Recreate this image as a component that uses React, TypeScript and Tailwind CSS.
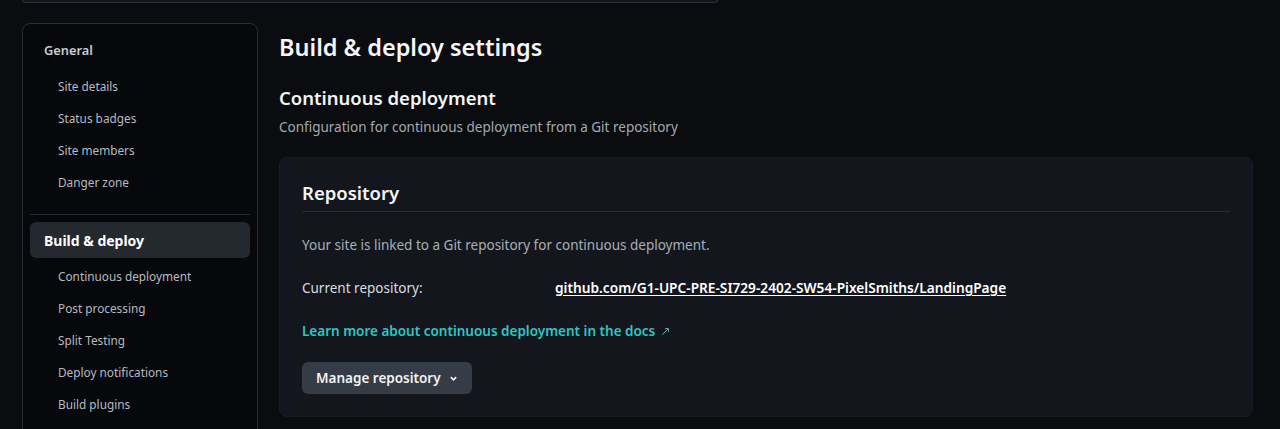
import React from "react";

const generalItems = ["Site details", "Status badges", "Site members", "Danger zone"];
const buildItems = [
  "Continuous deployment",
  "Post processing",
  "Split Testing",
  "Deploy notifications",
  "Build plugins",
];

function SubItem({ label }: { label: string }) {
  return (
    <div className="h-8 flex items-center pl-[28px] text-[11.8px] text-[#b6bac0]">{label}</div>
  );
}

export default function App() {
  return (
    <div
      className="min-h-screen bg-[#0a0c10] overflow-hidden"
      style={{ fontFamily: '"Noto Sans", "Open Sans", sans-serif' }}
    >
      <div className="ml-[22px] w-[696px] h-[3px] rounded-b-md border-b border-x border-[#2c3039] bg-[#12151b]" />
      <div className="flex pt-[20px] pl-[22px] pr-[27px] gap-[21px]">
        <aside className="w-[236px] shrink-0 h-[430px] rounded-lg border border-[#2a2e35] bg-[#06080b] px-[7px] pt-[9px]">
          <div className="h-9 flex items-center px-[14px] text-[12.8px] font-semibold text-[#c9ccd1]">
            General
          </div>
          <div className="mt-[2px]">
            {generalItems.map((i) => (
              <SubItem key={i} label={i} />
            ))}
          </div>
          <div className="mt-[15px] mb-[7px] h-px bg-[#262a31]" />
          <div className="h-9 flex items-center px-[14px] rounded-md bg-[#24282f] text-[14px] font-bold text-white">
            Build &amp; deploy
          </div>
          <div className="mt-[3px]">
            {buildItems.map((i) => (
              <SubItem key={i} label={i} />
            ))}
          </div>
        </aside>

        <main className="flex-1 pt-[8px]">
          <h1 className="text-[23.5px] leading-8 font-semibold text-[#f6f7f8]">Build &amp; deploy settings</h1>
          <h2 className="mt-[21px] text-[18.5px] leading-7 font-semibold text-[#f3f4f5]">Continuous deployment</h2>
          <p className="mt-[5px] text-[13.5px] leading-5 text-[#a4a9af]">
            Configuration for continuous deployment from a Git repository
          </p>

          <section className="mt-[20px] rounded-lg border border-[#181c23] bg-[#13171d] px-[22px] pt-[21px] pb-[22px]">
            <h3 className="pb-[4px] border-b border-[#2a2e35] text-[18.5px] leading-7 font-semibold text-[#f3f4f5]">
              Repository
            </h3>
            <p className="mt-[23px] text-[13.5px] leading-5 text-[#a9aeb4]">
              Your site is linked to a Git repository for continuous deployment.
            </p>
            <div className="mt-[23px] grid grid-cols-[253px_1fr] text-[13.5px] leading-5">
              <span className="text-[#d9dce0]">Current repository:</span>
              <a className="text-[13.7px] font-semibold text-white underline underline-offset-2 decoration-1">
                github.com/G1-UPC-PRE-SI729-2402-SW54-PixelSmiths/LandingPage
              </a>
            </div>
            <div className="mt-[23px] flex items-center gap-[6px] text-[13.5px] leading-5 font-semibold text-[#31c4c2]">
              <span>Learn more about continuous deployment in the docs</span>
              <svg width="9" height="9" viewBox="0 0 10 10" className="text-[#5fb7b6]">
                <path d="M1.5 8.5 L8 2 M4.5 1.8 H8.2 V5.5" fill="none" stroke="currentColor" strokeWidth="1.1" />
              </svg>
            </div>
            <button className="mt-[21px] h-8 px-[14px] flex items-center gap-[8px] rounded-md bg-[#363c45] text-[13.5px] font-semibold text-[#f1f2f4]">
              Manage repository
              <svg width="9" height="9" viewBox="0 0 10 10">
                <path d="M2 3.5 L5 6.5 L8 3.5" fill="none" stroke="currentColor" strokeWidth="1.8" />
              </svg>
            </button>
          </section>
        </main>
      </div>
    </div>
  );
}
